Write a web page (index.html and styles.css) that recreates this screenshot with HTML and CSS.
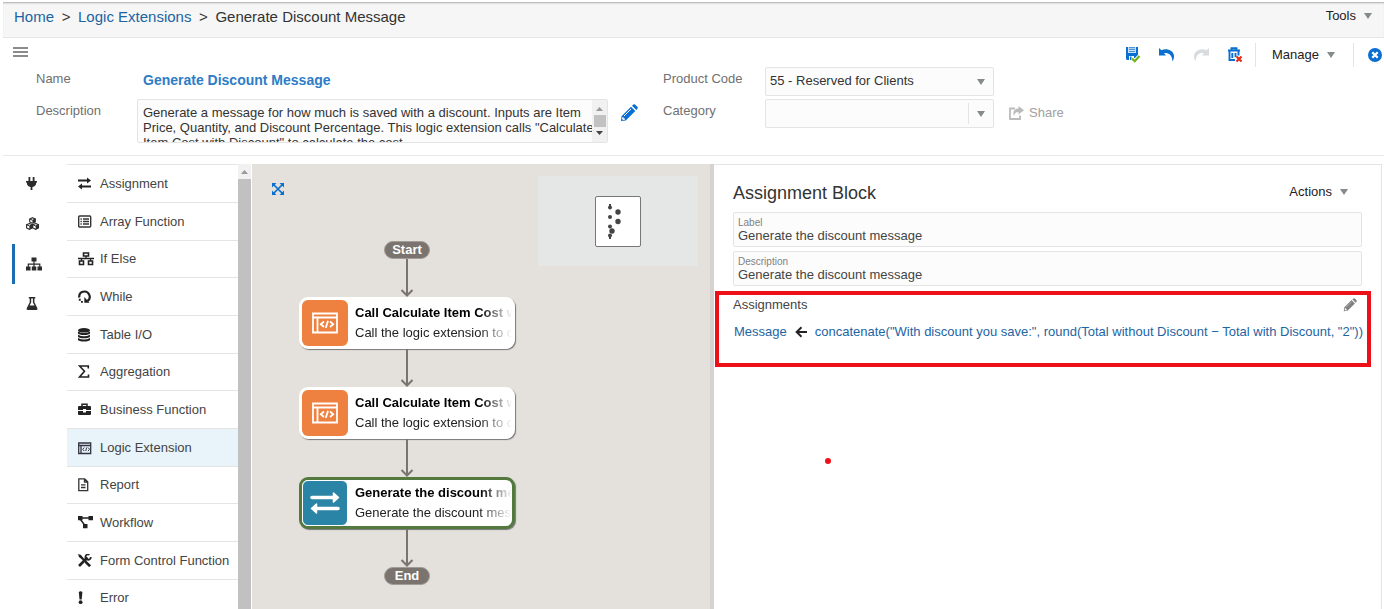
FILE: index.html
```html
<!DOCTYPE html>
<html lang="en">
<head>
<meta charset="utf-8">
<title>Generate Discount Message</title>
<link rel="stylesheet" href="styles.css">
</head>
<body>
<header class="topbar">
  <nav class="crumbs" aria-label="Breadcrumb">
    <a href="#">Home</a><span class="crumb-sep">&gt;</span><a href="#">Logic Extensions</a><span class="crumb-sep">&gt;</span><span>Generate Discount Message</span>
  </nav>
  <button class="menu-button" type="button">Tools <svg class="caret" viewBox="0 0 8 6"><path d="M0 0h8L4 6z"/></svg></button>
</header>

<section class="properties">
  <div class="toolbar">
    <button class="icon-button hamburger" type="button" aria-label="Menu"><svg width="15" height="10" viewBox="0 0 15 10"><path d="M0 1h15M0 5h15M0 9h15" stroke="#666" stroke-width="1.6"/></svg></button>
    <div class="tools">
      <button class="icon-button" type="button" aria-label="Save"><svg width="16" height="16" viewBox="0 0 16 16"><path d="M1 0h2v6h8V0h2v9l-4 4H2l-1-1z" fill="#0a6fd0"/><path d="M3 0h8v6H3z" fill="#cfe2f5"/><path d="M4 0h6v1.200H4zM4 2h6v1H4zM4 4h6v1H4z" fill="#4a95dc"/><path d="M4 9h5v4H4z" fill="#fff"/><path d="M5 9.500h1.500V13H5z" fill="#0a6fd0"/><path d="M7 11.500l2.700 2.700L14.500 9" fill="none" stroke="#fff" stroke-width="4"/><path d="M7 11.500l2.700 2.700L14.500 9" fill="none" stroke="#6cb515" stroke-width="2.200"/></svg></button>
      <button class="icon-button" type="button" aria-label="Undo"><svg width="16" height="16" viewBox="0 0 16 16"><path d="M0 1l2.500 2.300C7 1 14.500 3 15 9c.1 2-.5 4-1.700 5.200C13.500 8 9.500 5.500 5 6l2 2.500H0z" fill="#0a6fd0"/></svg></button>
      <button class="icon-button" type="button" aria-label="Redo" disabled><svg width="16" height="16" viewBox="0 0 16 16"><path d="M16 1l-2.500 2.300C9 1 1.500 3 1 9c-.1 2 .5 4 1.700 5.200C2.500 8 6.500 5.500 11 6L9 8.500h7z" fill="#d9dcde"/></svg></button>
      <button class="icon-button" type="button" aria-label="Delete"><svg width="16" height="16" viewBox="0 0 16 16"><path d="M1 3.500h12M4.500 3V1.200h5V3M2.500 4v9h5.500M11.500 4v4.500M5.300 6v5M8.500 6v4" fill="none" stroke="#0a6fd0" stroke-width="1.900"/><path d="M9.500 9.500l5 5m0-5l-5 5" stroke="#e0301e" stroke-width="2.300"/></svg></button>
      <span class="tool-sep"></span>
      <button class="menu-button" type="button">Manage <svg class="caret" viewBox="0 0 8 6"><path d="M0 0h8L4 6z"/></svg></button>
      <span class="tool-sep"></span>
      <button class="icon-button" type="button" aria-label="Close"><svg width="14" height="14" viewBox="0 0 14 14"><circle cx="7" cy="7" r="7" fill="#0a6fd0"/><path d="M4.300 4.300l5.400 5.400m0-5.400L4.300 9.700" stroke="#fff" stroke-width="2.300"/></svg></button>
    </div>
  </div>

  <div class="form">
    <span class="form-label">Name</span>
    <strong class="ext-name">Generate Discount Message</strong>
    <span></span>
    <label class="form-label" for="product">Product Code</label>
    <div class="select-box">
      <select id="product"><option>55 - Reserved for Clients</option></select>
      <svg class="caret" viewBox="0 0 8 6"><path d="M0 0h8L4 6z"/></svg>
    </div>
    <span></span>

    <label class="form-label" for="desc">Description</label>
    <div class="desc-box">
      <textarea id="desc" readonly>Generate a message for how much is saved with a discount. Inputs are Item
Price, Quantity, and Discount Percentage. This logic extension calls "Calculate
Item Cost with Discount" to calculate the cost.</textarea>
      <div class="desc-scroll">
        <svg width="7" height="4" viewBox="0 0 7 4"><path d="M0 4h7L3.500 0z" fill="#999"/></svg>
        <span class="desc-thumb"></span>
        <svg width="7" height="4" viewBox="0 0 7 4"><path d="M0 0h7L3.500 4z" fill="#444"/></svg>
      </div>
    </div>
    <button class="icon-button edit" type="button" aria-label="Edit description"><svg width="18" height="18" viewBox="0 0 18 18"><path d="M1.500 12.200L11 2.700l4.300 4.300-9.500 9.500L1 17zM12 1.700L13.300.6q1-.8 2 .2l2 2q1 1 .1 2L16.300 6z" fill="#0a6fd0"/><path d="M4 12l7-7" stroke="#fff" stroke-width="1"/><path d="M2.300 13.300h1.300v1.300h1.300v1.200l-1.700.3-1.200-1.200z" fill="#fff"/></svg></button>
    <label class="form-label" for="category">Category</label>
    <div class="select-box split">
      <select id="category"><option></option></select>
      <svg class="caret" viewBox="0 0 8 6"><path d="M0 0h8L4 6z"/></svg>
    </div>
    <button class="share" type="button" disabled><svg width="15" height="14" viewBox="0 0 15 14"><path d="M6 2.500H1V13h10V9.500" fill="none" stroke="#bbb" stroke-width="1.800"/><path d="M9.500 0L15 4.300 9.500 8.500V6C7 6 5.500 7 5 10 3.500 7 4.500 2.600 9.500 2.500z" fill="#bbb"/></svg>Share</button>
  </div>
</section>

<main class="workspace">
  <nav class="rail" aria-label="Views">
    <button class="rail-item" type="button" aria-label="Connections"><svg width="16" height="14" viewBox="0 0 16 14"><path d="M2.500 0h1.800v4H2.500zM6.700 0h1.800v4H6.700zM0 4h11v1.500h-.8C10.200 8 9 9.500 6.400 10v3H4.600v-3C2 9.500.8 8 .8 5.500H0z"/></svg></button>
    <button class="rail-item" type="button" aria-label="Objects"><svg width="16" height="14" viewBox="0 0 16 14"><g stroke="#2b2b2b" stroke-width="1.100" fill="none"><path d="M6.500.7l2.800 1.200v3L6.500 6.200 3.700 5V2zM3.400 6.500l2.900 1.200v3.200L3.400 12.300.6 11V7.700zM9.700 6.500l2.800 1.200V11l-2.800 1.300L6.800 11V7.700z"/></g><path d="M6.500 3.200L9.300 2v3L6.500 6.200zM3.400 9l2.900-1.300v3.200l-2.900 1.400zM9.700 9l2.800-1.300V11l-2.800 1.300z"/><path d="M.6 7.700L3.400 9l2.900-1.300M6.800 7.700L9.700 9l2.800-1.300M3.700 2l2.800 1.200L9.300 2" stroke="#2b2b2b" fill="none"/></svg></button>
    <button class="rail-item active" type="button" aria-label="Design"><svg width="16" height="14" viewBox="0 0 16 14"><path d="M5.500.5h5v4h-5zM0 9.500h4.500v4H0zM5.800 9.500h4.500v4H5.800zM11.500 9.500H16v4h-4.500z"/><path d="M8 4v6M2.300 10V7.200h11.500V10" stroke="#2b2b2b" stroke-width="1.200" fill="none"/></svg></button>
    <button class="rail-item" type="button" aria-label="Test"><svg width="16" height="14" viewBox="0 0 16 14"><path d="M2.800 0h6.500v1.500h-.9v3.700l3 6q.7 1.800-1.100 1.800H1.800q-1.800 0-1.100-1.800l3-6V1.500h-.9z"/><path d="M5.200 1.500h1.700v4L8.500 8.500H3.600l1.600-3z" fill="#fff"/></svg></button>
  </nav>

  <div class="palette">
    <ul class="palette-list">
      <li><button type="button"><svg viewBox="0 0 16 14"><path d="M0 3.500h10M3 9.500h10" stroke="#222" stroke-width="1.900"/><path d="M9 .4l4 3.100-4 3.100zM4 6.400L0 9.500l4 3.100z"/></svg>Assignment</button></li>
      <li><button type="button"><svg viewBox="0 0 16 14"><rect x=".7" y="1" width="12" height="11" rx="1" fill="none" stroke="#333" stroke-width="1.400"/><path d="M2.500 4h1.300M5 4h6M2.500 6.500h1.300M5 6.500h6M2.500 9h1.300M5 9h6" stroke="#333" stroke-width="1.300"/></svg>Array Function</button></li>
      <li><button type="button"><svg viewBox="0 0 16 14"><g fill="none" stroke="#222" stroke-width="1.600"><path d="M5.500 1h5v3h-5zM1.500 9h4v3.500h-4zM10.500 9h4v3.500h-4z"/><path d="M8 4v2.500M0 6.500h16M3.500 6.500V9M12.500 6.500V9" stroke-width="1.300"/></g></svg>If Else</button></li>
      <li><button type="button"><svg viewBox="0 0 16 14"><path d="M1.300 7.500A5.200 5.200 0 1 1 9.500 11" fill="none" stroke="#222" stroke-width="2.200"/><path d="M6.300 7v5.800h5.200z"/><path d="M.8 8.800h1.900v1.900H.8zM3 11h1.900v1.700H3z"/></svg>While</button></li>
      <li><button type="button"><svg viewBox="0 0 16 14"><ellipse cx="6" cy="2.300" rx="6" ry="2.300"/><path d="M0 3.400q6 3.200 12 0v1.800c0 2.400-12 2.400-12 0zM0 6.700q6 3.200 12 0v1.800c0 2.400-12 2.400-12 0zM0 10q6 3.200 12 0v1.700c0 2.400-12 2.400-12 0z"/></svg>Table I/O</button></li>
      <li><button type="button"><svg viewBox="0 0 16 14"><path d="M10.300 3.500V1H1.500l5 5.300L1.500 12h9V9.500" fill="none" stroke="#222" stroke-width="1.600"/></svg>Aggregation</button></li>
      <li><button type="button"><svg viewBox="0 0 16 14"><path d="M1 3h11q1 0 1 1v3H8V6H5v1H0V4q0-1 1-1zM0 8h5v1.500h3V8h5v3q0 1-1 1H1q-1 0-1-1z"/><path d="M4 3V1.200h5V3" fill="none" stroke="#222" stroke-width="1.500"/></svg>Business Function</button></li>
      <li class="selected"><button type="button"><svg viewBox="0 0 16 14"><path d="M.7 2h12v10.500H.7zM.7 4.500h12M3 5v7" fill="none" stroke="#334" stroke-width="1.300"/><path d="M6.300 6.500L4.700 8.300l1.600 1.800M7.700 10l1-3.500M10 6.500l1.600 1.800L10 10.100" fill="none" stroke="#334" stroke-width="1"/></svg>Logic Extension</button></li>
      <li><button type="button"><svg viewBox="0 0 16 14"><path d="M.8.800h5.900l3 3v8.900H.8zM6.500.800V4h3.200M3 6.800h4.500M3 9.500h4.500" fill="none" stroke="#333" stroke-width="1.300"/></svg>Report</button></li>
      <li><button type="button"><svg viewBox="0 0 16 14"><path d="M0 0h4.500v4.200H0zM10.500 0H15v4.200h-4.500zM5 8h4.500v4.200H5z"/><path d="M4 2h7M2.500 3.500L7 9.500" stroke="#222" stroke-width="1.400"/></svg>Workflow</button></li>
      <li><button type="button"><svg viewBox="0 0 16 14"><path d="M1.500 1.500L12 12" stroke="#222" stroke-width="2.200"/><path d="M0 0l3 1 2 3-1 1-3-2zM8.500 7.500l4.500 3.700-2 1.900L7 9z"/><path d="M1 12l8.500-8.500" stroke="#222" stroke-width="2.700"/><path d="M11.500.8A2.700 2.700 0 1 0 12.800 3" fill="none" stroke="#222" stroke-width="1.700"/></svg>Form Control Function</button></li>
      <li><button type="button"><svg viewBox="0 0 16 14"><path d="M.8 1q1.800-1.400 3.600 0L3.700 8.500H1.500z"/><circle cx="2.600" cy="11.200" r="1.900"/></svg>Error</button></li>
    </ul>
    <div class="palette-scroll">
      <svg width="7" height="4" viewBox="0 0 7 4"><path d="M0 4h7L3.500 0z" fill="#999"/></svg>
      <span class="palette-thumb"></span>
    </div>
  </div>

  <section class="canvas" aria-label="Diagram">
    <button class="icon-button fit" type="button" aria-label="Fit to view"><svg width="12" height="12" viewBox="0 0 12 12"><path d="M1.500 1.500l9 9m0-9l-9 9" stroke="#0a6fd0" stroke-width="1.700"/><path d="M0 0h4.500L0 4.500zM12 0v4.500L7.500 0zM0 12V7.500L4.500 12zM12 12H7.500L12 7.500z" fill="#0a6fd0"/></svg></button>
    <div class="flow">
      <span class="terminal">Start</span>
      <svg class="link" viewBox="0 0 14 38"><path d="M7 0v36M1.500 31L7 36.500 12.500 31"/></svg>
      <div class="node">
        <span class="node-icon"><svg width="26" height="22" viewBox="0 0 26 22"><path d="M1 1.500h24v19H1zM1 5.500h24M5.500 6v14" fill="none" stroke="#fff" stroke-width="1.800"/><path d="M12 9.500L8.800 12.300 12 15M13.800 16L16 8.800M18 9.500l3.200 2.800L18 15" fill="none" stroke="#fff" stroke-width="1.800"/></svg></span>
        <span class="node-text"><b>Call Calculate Item Cost w</b><span>Call the logic extension to c</span></span>
      </div>
      <svg class="link" viewBox="0 0 14 38"><path d="M7 0v36M1.500 31L7 36.500 12.500 31"/></svg>
      <div class="node">
        <span class="node-icon"><svg width="26" height="22" viewBox="0 0 26 22"><path d="M1 1.500h24v19H1zM1 5.500h24M5.500 6v14" fill="none" stroke="#fff" stroke-width="1.800"/><path d="M12 9.500L8.800 12.300 12 15M13.800 16L16 8.800M18 9.500l3.200 2.800L18 15" fill="none" stroke="#fff" stroke-width="1.800"/></svg></span>
        <span class="node-text"><b>Call Calculate Item Cost w</b><span>Call the logic extension to c</span></span>
      </div>
      <svg class="link" viewBox="0 0 14 38"><path d="M7 0v36M1.500 31L7 36.500 12.500 31"/></svg>
      <div class="node current">
        <span class="node-icon assign"><svg width="30" height="24" viewBox="0 0 30 24"><path d="M2 6.500h21M7 17.500h21" stroke="#fff" stroke-width="3.600" stroke-linecap="round"/><path d="M23.500 2l5 4.500-5 4.500zM6.500 13l-5 4.500 5 4.500z" fill="#fff" stroke="#fff" stroke-width="1.500" stroke-linejoin="round"/></svg></span>
        <span class="node-text"><b>Generate the discount me</b><span>Generate the discount mes</span></span>
      </div>
      <svg class="link" viewBox="0 0 14 38"><path d="M7 0v36M1.500 31L7 36.500 12.500 31"/></svg>
      <span class="terminal">End</span>
    </div>
    <div class="minimap">
      <svg class="mini-view" viewBox="0 0 44 49"><g fill="#444"><circle cx="14" cy="10.500" r="2"/><path d="M13 7h2v4h-2zM13 38h2v4h-2z"/><circle cx="22" cy="15" r="2.700"/><circle cx="14" cy="20" r="2"/><circle cx="22" cy="24.500" r="2.700"/><circle cx="14" cy="29.500" r="2"/><circle cx="16" cy="34" r="2.700"/><circle cx="14" cy="38.500" r="2"/></g></svg>
    </div>
  </section>

  <section class="panel">
    <div class="panel-head">
      <h1>Assignment Block</h1>
      <button class="menu-button" type="button">Actions <svg class="caret" viewBox="0 0 8 6"><path d="M0 0h8L4 6z"/></svg></button>
    </div>
    <div class="field">
      <label for="block-label">Label</label>
      <input id="block-label" type="text" value="Generate the discount message" readonly>
    </div>
    <div class="field">
      <label for="block-desc">Description</label>
      <input id="block-desc" type="text" value="Generate the discount message" readonly>
    </div>
    <div class="assignments">
      <div class="assign-head">
        <h2>Assignments</h2>
        <button class="icon-button" type="button" aria-label="Edit assignments"><svg width="14" height="14" viewBox="0 0 18 18"><path d="M1.500 12.200L11 2.700l4.300 4.300-9.500 9.500L1 17zM12 1.700L13.300.6q1-.8 2 .2l2 2q1 1 .1 2L16.300 6z" fill="#808080"/><path d="M4 12l7-7" stroke="#bbb" stroke-width="1"/><path d="M2.300 13.300h1.300v1.300h1.300v1.200l-1.700.3-1.200-1.200z" fill="#fff"/></svg></button>
      </div>
      <div class="assign-row">
        <a href="#">Message</a>
        <svg width="12" height="12" viewBox="0 0 12 12"><path d="M12 6H1.800M6.500 1.200L1.600 6l4.900 4.800" fill="none" stroke="#222" stroke-width="1.900"/></svg>
        <a href="#">concatenate("With discount you save:", round(Total without Discount − Total with Discount, "2"))</a>
      </div>
    </div>
    <span class="marker"></span>
  </section>
</main>
</body>
</html>
```
FILE: styles.css
```css
* { box-sizing: border-box; }

body {
  margin: 0;
  padding: 2px 0 0 3px;
  height: 100vh;
  display: flex;
  flex-direction: column;
  overflow: hidden;
  background: #fff;
  color: #444;
  font: 13px/16px "Liberation Sans", Arial, sans-serif;
}

button, select, input, textarea {
  font: inherit;
  color: inherit;
  background: none;
  border: 0;
  margin: 0;
  padding: 0;
}

a { color: #1d64a3; text-decoration: none; }
svg { display: block; flex: none; }

.caret { width: 8px; height: 6px; fill: #858a8d; }

.icon-button { display: flex; align-items: center; justify-content: center; }

.menu-button {
  display: flex;
  align-items: center;
  gap: 8px;
  color: #222;
}

/* Top bar */
.topbar {
  display: flex;
  justify-content: space-between;
  align-items: flex-start;
  height: 36px;
  flex: none;
  padding: 6px 12px 0 11px;
  background: #f6f6f6;
  border-bottom: 1px solid #e4e7ea;
  box-shadow: inset 0 2px 2px -1px #aaa;
}

.crumbs { font-size: 15px; line-height: 18px; color: #333; display: flex; }
.crumb-sep { width: 24px; text-align: center; }

/* Properties */
.properties { flex: none; border-bottom: 1px solid #e8e8e8; }

.toolbar {
  display: flex;
  justify-content: space-between;
  align-items: flex-start;
  height: 29px;
  padding: 5px 2px 0 10px;
}
.hamburger { height: 18px; }

.tools { display: flex; align-items: center; gap: 18px; }
.tool-sep { width: 1px; height: 24px; margin: 0 -2px 0 -6px; background: #e2e5e8; }
.tool-sep:nth-of-type(2) { margin-right: -4px; margin-left: 0; }

.form {
  display: grid;
  grid-template-columns: 101px 471px 55px 102px 229px 1fr;
  grid-template-rows: 29px 44px;
  row-gap: 3px;
  padding: 0 0 12px 33px;
  align-items: start;
}

.form-label { color: #707070; line-height: 24px; }
.ext-name { color: #2c7cc8; font-size: 14px; line-height: 26px; padding-left: 6px; }

.select-box {
  display: flex;
  align-items: center;
  position: relative;
  height: 29px;
  background: #fcfcfc;
  border: 1px solid #e4e4e4;
  border-radius: 2px;
}
.select-box select { appearance: none; width: 100%; height: 100%; padding: 0 28px 2px 4px; color: #333; }
.select-box .caret { position: absolute; right: 8px; top: 11px; pointer-events: none; }
.select-box.split::after { content: ""; position: absolute; right: 24px; top: 3px; bottom: 3px; width: 1px; background: #e4e4e4; }

.desc-box {
  display: flex;
  height: 44px;
  background: #fcfcfc;
  border: 1px solid #e4e4e4;
  border-radius: 2px;
}
.desc-box textarea {
  flex: 1;
  min-width: 0;
  height: 42px;
  padding: 5px 0 0 5px;
  resize: none;
  overflow: hidden;
  white-space: pre;
  line-height: 15px;
  color: #333;
}
.desc-scroll {
  width: 15px;
  flex: none;
  display: flex;
  flex-direction: column;
  align-items: center;
  justify-content: space-between;
  padding: 7px 0;
  background: #f1f1f1;
}
.desc-thumb { width: 12px; height: 12px; background: #c1c1c1; }

.edit { justify-self: start; margin: 5px 0 0 12px; }
.share { display: flex; align-items: center; gap: 5px; margin: 6px 0 0 15px; color: #a0a0a0; }

/* Workspace */
.workspace { flex: 1; min-height: 0; display: flex; padding: 8px 2px 0 0; }

.rail { width: 64px; flex: none; display: flex; flex-direction: column; }
.rail-item {
  display: flex;
  align-items: center;
  width: 42px;
  height: 40px;
  margin-left: 9px;
  padding-left: 11px;
  border-left: 3px solid transparent;
  fill: #2b2b2b;
}
.rail-item.active { border-left-color: #1a6cb5; }

.palette { width: 184px; flex: none; display: flex; }
.palette-list { flex: 1; margin: 0; padding: 0; list-style: none; border-top: 1px solid #e4e4e4; overflow: hidden; }
.palette-list li { height: 38px; border-bottom: 1px solid #e4e4e4; }
.palette-list li:nth-child(3n) { height: 37px; }
.palette-list button { display: flex; align-items: center; gap: 6px; width: 100%; height: 100%; padding-left: 11px; color: #444; }
.palette-list svg { width: 16px; height: 14px; fill: #222; }
.palette-list .selected { background: #e8f3fa; }
.palette-scroll { width: 13px; display: flex; flex-direction: column; align-items: center; background: #f1f1f1; gap: 5px; padding-top: 6px; }
.palette-thumb { width: 13px; flex: 1; background: #c1c1c1; }

.canvas { position: relative; flex: 0 0 462px; margin-left: 1px; background: #e4e1dc; border-right: 4px solid #d6d2d1; overflow: hidden; }
.fit { position: absolute; left: 20px; top: 19px; }

.flow {
  position: absolute;
  left: 47px;
  top: 77px;
  width: 216px;
  display: flex;
  flex-direction: column;
  align-items: center;
}
.terminal {
  width: 46px;
  height: 18px;
  border: 1px solid #a19c98;
  border-radius: 9px;
  background: #7a736e;
  color: #fff;
  font-weight: bold;
  text-align: center;
}
.link { width: 14px; height: 38px; fill: none; stroke: #7a736e; stroke-width: 2; }

.node {
  display: flex;
  align-items: center;
  gap: 7px;
  width: 216px;
  height: 52px;
  border: 3px solid #fff;
  border-radius: 9px;
  background: #fff;
  box-shadow: 1px 1px 1px #777;
}
.node.current { border-color: #54793f; }
.node-icon {
  width: 46px;
  height: 46px;
  flex: none;
  display: flex;
  align-items: center;
  justify-content: center;
  border-radius: 6px;
  background: #ee8140;
}
.node-icon.assign { background: #2a84a5; border: 1px solid #fff; }
.node-text {
  flex: 1;
  min-width: 0;
  overflow: hidden;
  white-space: nowrap;
  line-height: 20px;
  color: #222;
  -webkit-mask-image: linear-gradient(to right, #000 125px, transparent 157px);
  mask-image: linear-gradient(to right, #000 125px, transparent 157px);
}
.node-text b, .node-text span { display: block; }
.node-text b { color: #000; }

.minimap {
  position: absolute;
  top: 12px;
  right: 12px;
  width: 160px;
  height: 90px;
  display: flex;
  align-items: center;
  justify-content: center;
  background: #e4e7e5;
}
.mini-view { width: 46px; height: 51px; background: #fff; border: 1px solid #777; border-radius: 2px; }

/* Detail panel */
.panel { position: relative; flex: 1; min-width: 0; border: solid #e4e4e4; border-width: 1px 1px 0 0; padding: 14px 10px 0 1px; }
.panel-head { display: flex; justify-content: space-between; align-items: center; height: 28px; margin: 0 23px 5px 18px; }
.panel-head h1 { margin: 0; font-size: 18px; font-weight: normal; line-height: 28px; color: #333; }
.panel-head .menu-button { padding-bottom: 2px; }

.field {
  display: flex;
  flex-direction: column;
  height: 35px;
  margin: 0 9px 4px 18px;
  padding: 4px;
  background: #fcfcfc;
  border: 1px solid #e4e4e4;
  border-radius: 2px;
}
.field label { font-size: 10px; line-height: 11px; color: #808080; }
.field input { height: 15px; line-height: 15px; color: #444; }

.assignments { height: 76px; margin-top: 5px; padding: 0 10px 0 14px; border: 4px solid #ee1019; }
.assign-head { display: flex; justify-content: space-between; align-items: center; height: 20px; }
.assign-head h2 { margin: 0; font-size: 13px; font-weight: normal; }
.assign-row { display: flex; align-items: center; gap: 8px; padding: 9px 0 0 1px; white-space: nowrap; }

.marker { position: absolute; left: 111px; top: 293px; width: 6px; height: 6px; border-radius: 50%; background: #ee1019; }
```
